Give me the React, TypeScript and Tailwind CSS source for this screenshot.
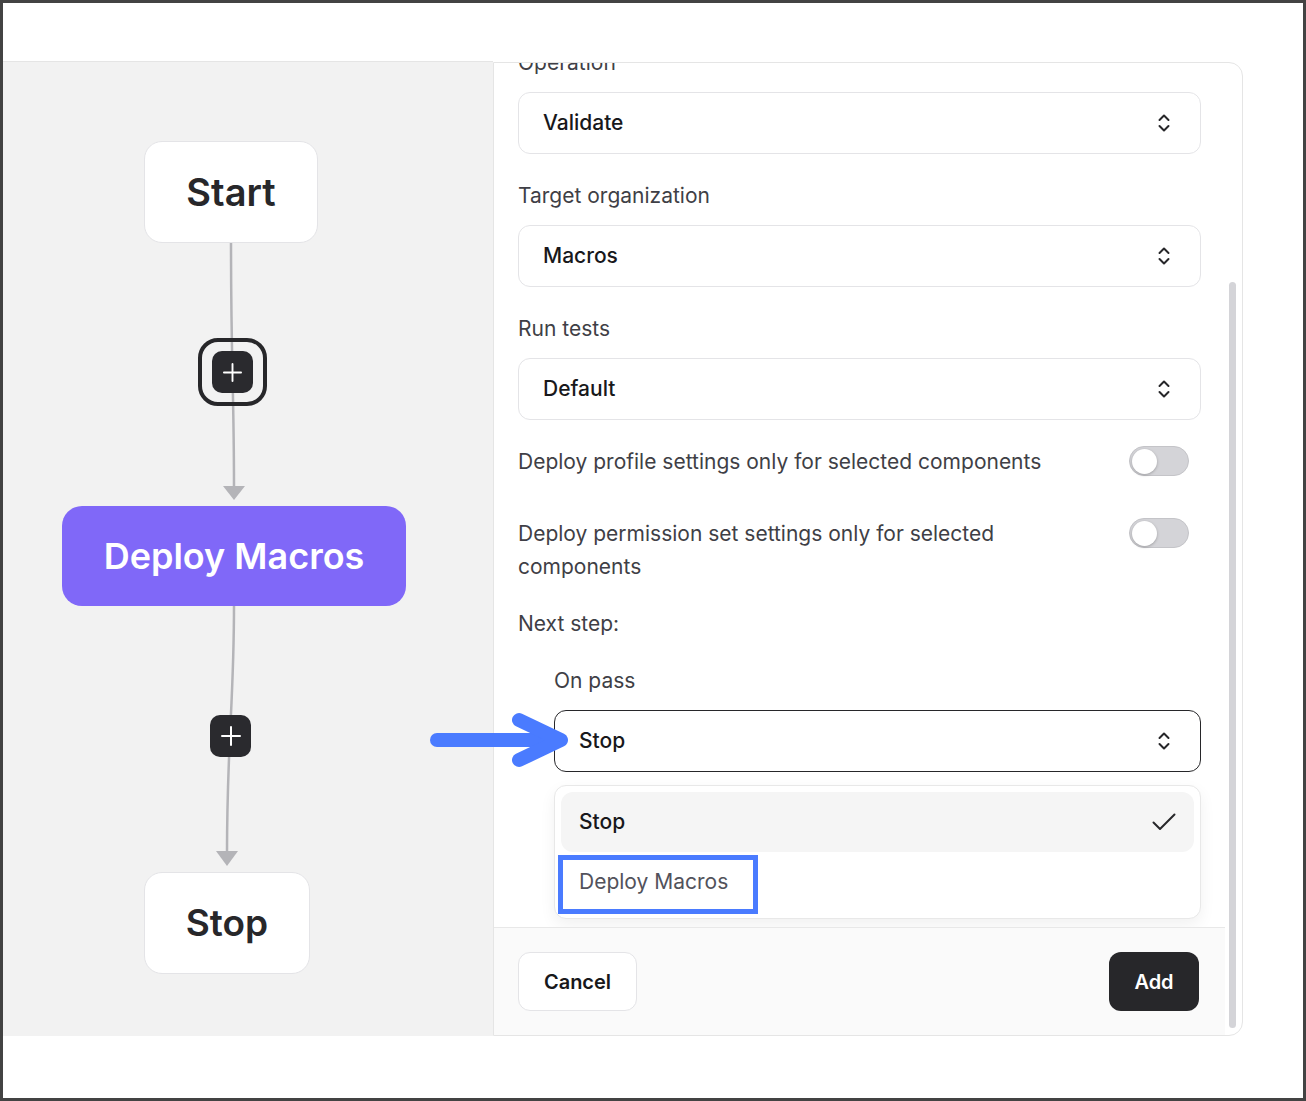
import React from 'react';

const ChevronsUpDown = () => (
    <svg width="12" height="20" viewBox="0 0 12 20" fill="none" stroke="#27272a" strokeWidth="2" strokeLinecap="round" strokeLinejoin="round">
        <polyline points="1.5,7 6,2.5 10.5,7" />
        <polyline points="1.5,13 6,17.5 10.5,13" />
    </svg>
);

const PlusGlyph = ({ size = 20 }: { size?: number }) => (
    <svg width={size} height={size} viewBox="0 0 20 20" fill="none" stroke="white" strokeWidth="2" strokeLinecap="round">
        <line x1="10" y1="1" x2="10" y2="19" />
        <line x1="1" y1="10" x2="19" y2="10" />
    </svg>
);

const SelectBox = ({ value, focused = false }: { value: string; focused?: boolean }) => (
    <div
        className={
            focused
                ? 'flex h-[62px] items-center justify-between rounded-xl border-[1.5px] border-[#27272a] bg-white pl-6 pr-[30px]'
                : 'flex h-[62px] items-center justify-between rounded-xl border border-[#e4e4e7] bg-white pl-6 pr-[30px]'
        }
    >
        <span className="text-[21px] font-medium text-[#18181b]">{value}</span>
        <ChevronsUpDown />
    </div>
);

const Toggle = () => (
    <div className="mr-3 flex h-[30px] w-[60px] shrink-0 items-center rounded-full border border-[#c4c4c8] bg-[#d4d4d8] px-[2px]">
        <div className="h-[25px] w-[25px] rounded-full bg-white shadow-[0_1px_3px_rgba(0,0,0,0.25)]" />
    </div>
);

const FlowCanvas = () => (
    <div className="relative w-[490px] shrink-0 border-t border-[#e5e5e5] bg-[#f2f2f2]">
        {/* edges */}
        <svg className="absolute left-0 top-0" width="490" height="974" fill="none">
            <path d="M228 181 C228 300 231 330 231 426" stroke="#b4b4b8" strokeWidth="2.5" />
            <polygon points="220,424 242,424 231,438" fill="#b4b4b8" />
            <path d="M231 544 C231 640 224 680 224 791" stroke="#b4b4b8" strokeWidth="2.5" />
            <polygon points="213,789 235,789 224,804" fill="#b4b4b8" />
        </svg>

        <div className="absolute left-[141px] top-[79px] flex h-[102px] w-[174px] items-center justify-center rounded-[18px] border border-[#e4e4e7] bg-white">
            <span className="text-[38px] font-semibold text-[#27272a]">Start</span>
        </div>

        <div className="absolute left-[195px] top-[276px] flex h-[68px] w-[69px] items-center justify-center rounded-[20px] border-[4px] border-[#27272a]">
            <div className="flex h-[42px] w-[41px] items-center justify-center rounded-[10px] bg-[#2a2a2e]">
                <PlusGlyph size={19} />
            </div>
        </div>

        <div className="absolute left-[59px] top-[444px] flex h-[100px] w-[344px] items-center justify-center rounded-[20px] bg-[#8068f8]">
            <span className="text-[36px] font-semibold text-white">Deploy Macros</span>
        </div>

        <div className="absolute left-[207px] top-[653px] flex h-[42px] w-[41px] items-center justify-center rounded-[10px] bg-[#2a2a2e]">
            <PlusGlyph size={20} />
        </div>

        <div className="absolute left-[141px] top-[810px] flex h-[102px] w-[166px] items-center justify-center rounded-[18px] border border-[#e4e4e7] bg-white">
            <span className="text-[37px] font-semibold text-[#27272a]">Stop</span>
        </div>
    </div>
);

const StepPanel = () => (
    <div className="mt-px flex w-[750px] shrink-0 overflow-hidden rounded-r-[14px] border border-[#e5e5e5] bg-white">
        <div className="flex w-[731px] flex-col">
            <div className="h-[864px] overflow-hidden px-6">
                <div className="-mt-[14px] h-7 text-[21px] leading-7 text-[#3f3f46]">Operation</div>
                <div className="mt-[15px]">
                    <SelectBox value="Validate" />
                </div>

                <div className="mt-7 h-7 text-[21px] leading-7 text-[#3f3f46]">Target organization</div>
                <div className="mt-[15px]">
                    <SelectBox value="Macros" />
                </div>

                <div className="mt-7 h-7 text-[21px] leading-7 text-[#3f3f46]">Run tests</div>
                <div className="mt-[15px]">
                    <SelectBox value="Default" />
                </div>

                <div className="mt-[25px] flex items-start justify-between">
                    <p className="w-[560px] text-[21px] leading-[33px] text-[#3f3f46]">Deploy profile settings only for selected components</p>
                    <div className="mt-[1px]">
                        <Toggle />
                    </div>
                </div>

                <div className="mt-[39px] flex items-start justify-between">
                    <p className="w-[560px] text-[21px] leading-[33px] text-[#3f3f46]">Deploy permission set settings only for selected components</p>
                    <div className="mt-[1px]">
                        <Toggle />
                    </div>
                </div>

                <div className="mt-[27px] h-7 text-[21px] leading-7 text-[#3f3f46]">Next step:</div>

                <div className="pl-9">
                    <div className="mt-[29px] h-7 text-[21px] leading-7 text-[#3f3f46]">On pass</div>
                    <div className="mt-[15px]">
                        <SelectBox value="Stop" focused />
                    </div>

                    <div className="relative mt-[13px] rounded-xl border border-[#e8e8e8] bg-white p-[6px] shadow-[0_6px_16px_rgba(0,0,0,0.06)]">
                        <div className="flex h-[60px] items-center justify-between rounded-xl bg-[#f5f5f5] pl-[18px] pr-[18px]">
                            <span className="text-[21px] font-medium text-[#18181b]">Stop</span>
                            <svg width="24" height="18" viewBox="0 0 24 18" fill="none" stroke="#27272a" strokeWidth="2" strokeLinecap="round" strokeLinejoin="round">
                                <path d="M1.5 9.5 L8 16 L22.5 1.5" />
                            </svg>
                        </div>
                        <div className="flex h-[60px] items-center pl-[18px]">
                            <span className="text-[21px] text-[#52525b]">Deploy Macros</span>
                        </div>
                        {/* highlight annotation */}
                        <div className="absolute left-[3px] top-[69px] h-[59px] w-[200px] border-[5px] border-[#4a7bff]" />
                    </div>
                </div>
            </div>

            <div className="flex h-[108px] items-start justify-between border-t border-[#e8e8e8] bg-[#fafafa] pl-6 pr-[26px] pt-6">
                <button className="h-[59px] w-[119px] rounded-xl border border-[#e4e4e7] bg-white text-[20px] font-semibold text-[#18181b]">
                    Cancel
                </button>
                <button className="h-[59px] w-[90px] rounded-xl bg-[#27272a] text-[20px] font-semibold text-white">Add</button>
            </div>
        </div>

        <div className="flex w-[17px] flex-col pl-[4px]">
            <div className="mt-[219px] h-[746px] w-[7px] rounded-full bg-[#d4d4d8]" />
        </div>
    </div>
);

export default function App() {
    return (
        <div className="flex h-[1101px] w-[1306px] flex-col border-[3px] border-[#434343] bg-white font-['Inter',sans-serif]">
            <div className="h-[58px] shrink-0" />
            <div className="relative flex h-[975px] shrink-0">
                <FlowCanvas />
                <StepPanel />
                {/* pointer arrow */}
                <svg className="absolute left-[417px] top-[639px]" width="170" height="80" fill="none" stroke="#4a7bff" strokeWidth="14" strokeLinecap="round" strokeLinejoin="round">
                    <line x1="17" y1="40" x2="136" y2="40" />
                    <polyline points="99,20 141,40 99,60" />
                </svg>
            </div>
        </div>
    );
}
